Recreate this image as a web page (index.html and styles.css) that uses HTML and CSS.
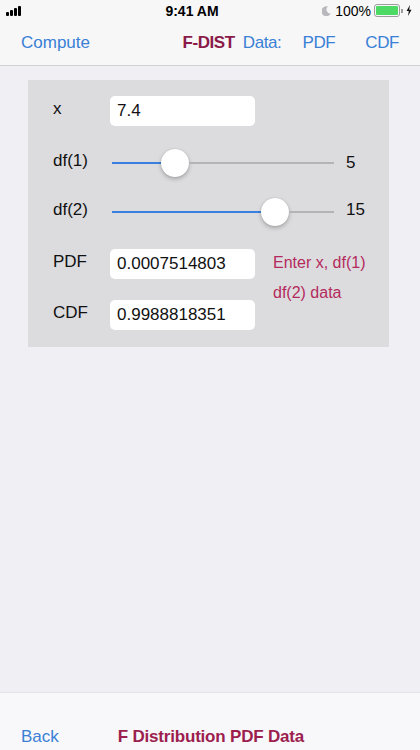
FILE: index.html
```html
<html lang="en">

<head>
    <meta charset="UTF-8">
    <title>F-DIST</title>
    <link rel="stylesheet" href="styles.css">
</head>

<body>
    <div id="screen">
        <div class="status">
            <div class="signal">
                <span class="bar b1"></span>
                <span class="bar b2"></span>
                <span class="bar b3"></span>
                <span class="bar b4"></span>
            </div>
            <div class="time">9:41 AM</div>
            <div class="status-right">
                <svg class="moon" width="9" height="10" viewBox="0 0 9 10">
                    <path d="M6 0.5 A5 5 0 1 0 8.8 7.6 A4 4 0 0 1 6 0.5 Z" fill="#b9b9bd" />
                </svg>
                <span class="pct">100%</span>
                <div class="battery">
                    <div class="battery-fill"></div>
                </div>
                <div class="battery-cap"></div>
                <svg class="bolt" width="6" height="11" viewBox="0 0 6 11">
                    <path d="M4 0 L0.5 6 H2.8 L2 11 L5.5 4.8 H3.2 Z" fill="#111" />
                </svg>
            </div>
        </div>

        <div class="navbar">
            <a class="link">Compute</a>
            <div class="nav-right">
                <span class="nav-title">F-DIST</span>
                <a class="link">Data:</a>
                <a class="link pdf">PDF</a>
                <a class="link cdf">CDF</a>
            </div>
        </div>

        <div class="main">
            <div class="panel">
                <div class="row row-x">
                    <div class="label">x</div>
                    <div class="field">7.4</div>
                </div>
                <div class="row row-df1">
                    <div class="label">df(1)</div>
                    <div class="slider">
                        <div class="track-on" style="width: 49px"></div>
                        <div class="thumb"></div>
                        <div class="track-off"></div>
                    </div>
                    <div class="value">5</div>
                </div>
                <div class="row row-df2">
                    <div class="label">df(2)</div>
                    <div class="slider">
                        <div class="track-on" style="width: 149px"></div>
                        <div class="thumb"></div>
                        <div class="track-off"></div>
                    </div>
                    <div class="value">15</div>
                </div>
                <div class="results">
                    <div class="result-fields">
                        <div class="row row-pdf">
                            <div class="label">PDF</div>
                            <div class="field">0.0007514803</div>
                        </div>
                        <div class="row row-cdf">
                            <div class="label">CDF</div>
                            <div class="field">0.9988818351</div>
                        </div>
                    </div>
                    <div class="hint">Enter x, df(1)<br>df(2) data</div>
                </div>
            </div>
        </div>

        <div class="toolbar">
            <a class="link back">Back</a>
            <span class="toolbar-title">F Distribution PDF Data</span>
        </div>
    </div>
</body>

</html>
```

FILE: styles.css
```css
body {
    margin: 0px;
    padding: 0px;
    font-family: "Liberation Sans", Arial, sans-serif;
    background: #efeff4;
}

a {
    margin: 0px;
    padding: 0px;
}

#screen {
    width: 420px;
    height: 750px;
    display: flex;
    flex-direction: column;
    overflow: hidden;
}

/* status bar */
.status {
    height: 21px;
    display: flex;
    align-items: center;
    justify-content: space-between;
    padding: 0 6px;
    background: #f7f7f8;
}

.signal {
    width: 60px;
    display: flex;
    align-items: flex-end;
    gap: 1px;
    height: 10px;
}

.bar {
    width: 3px;
    background: #000;
    border-radius: 1px;
}

.b1 { height: 4px; }
.b2 { height: 6px; }
.b3 { height: 8px; }
.b4 { height: 10px; }

.time {
    font-size: 14px;
    font-weight: bold;
    color: #000;
}

.status-right {
    width: 94px;
    display: flex;
    align-items: center;
    justify-content: flex-end;
    padding-right: 2px;
}

.moon {
    margin-right: 4px;
}

.pct {
    font-size: 14px;
    color: #000;
    margin-right: 3px;
}

.battery {
    width: 22px;
    height: 9px;
    border: 1px solid #9c9c9c;
    border-radius: 3px;
    padding: 1px;
}

.battery-fill {
    width: 100%;
    height: 100%;
    background: #4cd964;
    border-radius: 1px;
}

.battery-cap {
    width: 2px;
    height: 4px;
    background: #9c9c9c;
    margin-left: 1px;
    margin-right: 3px;
}

/* nav bar */
.navbar {
    height: 44px;
    display: flex;
    align-items: center;
    padding: 0 21px;
    background: #f7f7f8;
    border-bottom: 1px solid #cfcfd3;
}

.link {
    font-size: 17px;
    color: #3a80d6;
}

.nav-right {
    margin-left: auto;
    display: flex;
    align-items: center;
    letter-spacing: -0.4px;
}

.nav-title {
    font-size: 17px;
    font-weight: bold;
    color: #8a1a48;
    margin-right: 8px;
}

.pdf {
    margin-left: 21px;
}

.cdf {
    margin-left: 30px;
}

/* main panel */
.main {
    flex: 1;
    padding: 14px 31px 0 28px;
}

.panel {
    background: #dcdcdf;
    padding: 16px 0 18px 25px;
    height: 267px;
    box-sizing: border-box;
}

.row {
    display: flex;
    align-items: center;
    height: 30px;
}

.row-df1 {
    margin-top: 22px;
}

.row-df2 {
    margin-top: 19px;
}

.results {
    display: flex;
    margin-top: 22px;
}

.row-cdf {
    margin-top: 21px;
}

.label {
    width: 57px;
    font-size: 17px;
    color: #111;
    margin-top: -5px;
}

.field {
    width: 138px;
    height: 30px;
    line-height: 30px;
    padding-left: 7px;
    background: #fff;
    border-radius: 5px;
    font-size: 17px;
    color: #111;
}

.slider {
    width: 222px;
    margin-left: 2px;
    display: flex;
    align-items: center;
    height: 30px;
}

.track-on {
    height: 2px;
    background: #3a7fe0;
}

.track-off {
    flex: 1;
    height: 2px;
    background: #b4b4b8;
}

.thumb {
    width: 28px;
    height: 28px;
    border-radius: 14px;
    background: #fff;
    box-shadow: 0 2px 4px rgba(0, 0, 0, 0.25), 0 0 1px rgba(0, 0, 0, 0.2);
}

.value {
    margin-left: 12px;
    font-size: 17px;
    color: #111;
}

.row-df2 .value {
    margin-top: -4px;
}

.hint {
    margin-left: 18px;
    font-size: 16px;
    line-height: 30px;
    color: #b42a5c;
    margin-top: -1px;
}

/* bottom toolbar */
.toolbar {
    height: 58px;
    display: flex;
    align-items: flex-end;
    padding: 0 21px 4px 21px;
    box-sizing: border-box;
    background: #f8f8fa;
    border-top: 1px solid #e4e4e8;
}

.back {
    line-height: 18px;
}

.toolbar-title {
    margin-left: 59px;
    font-size: 17px;
    font-weight: bold;
    color: #9c1e4e;
    line-height: 18px;
    letter-spacing: -0.2px;
}
```
